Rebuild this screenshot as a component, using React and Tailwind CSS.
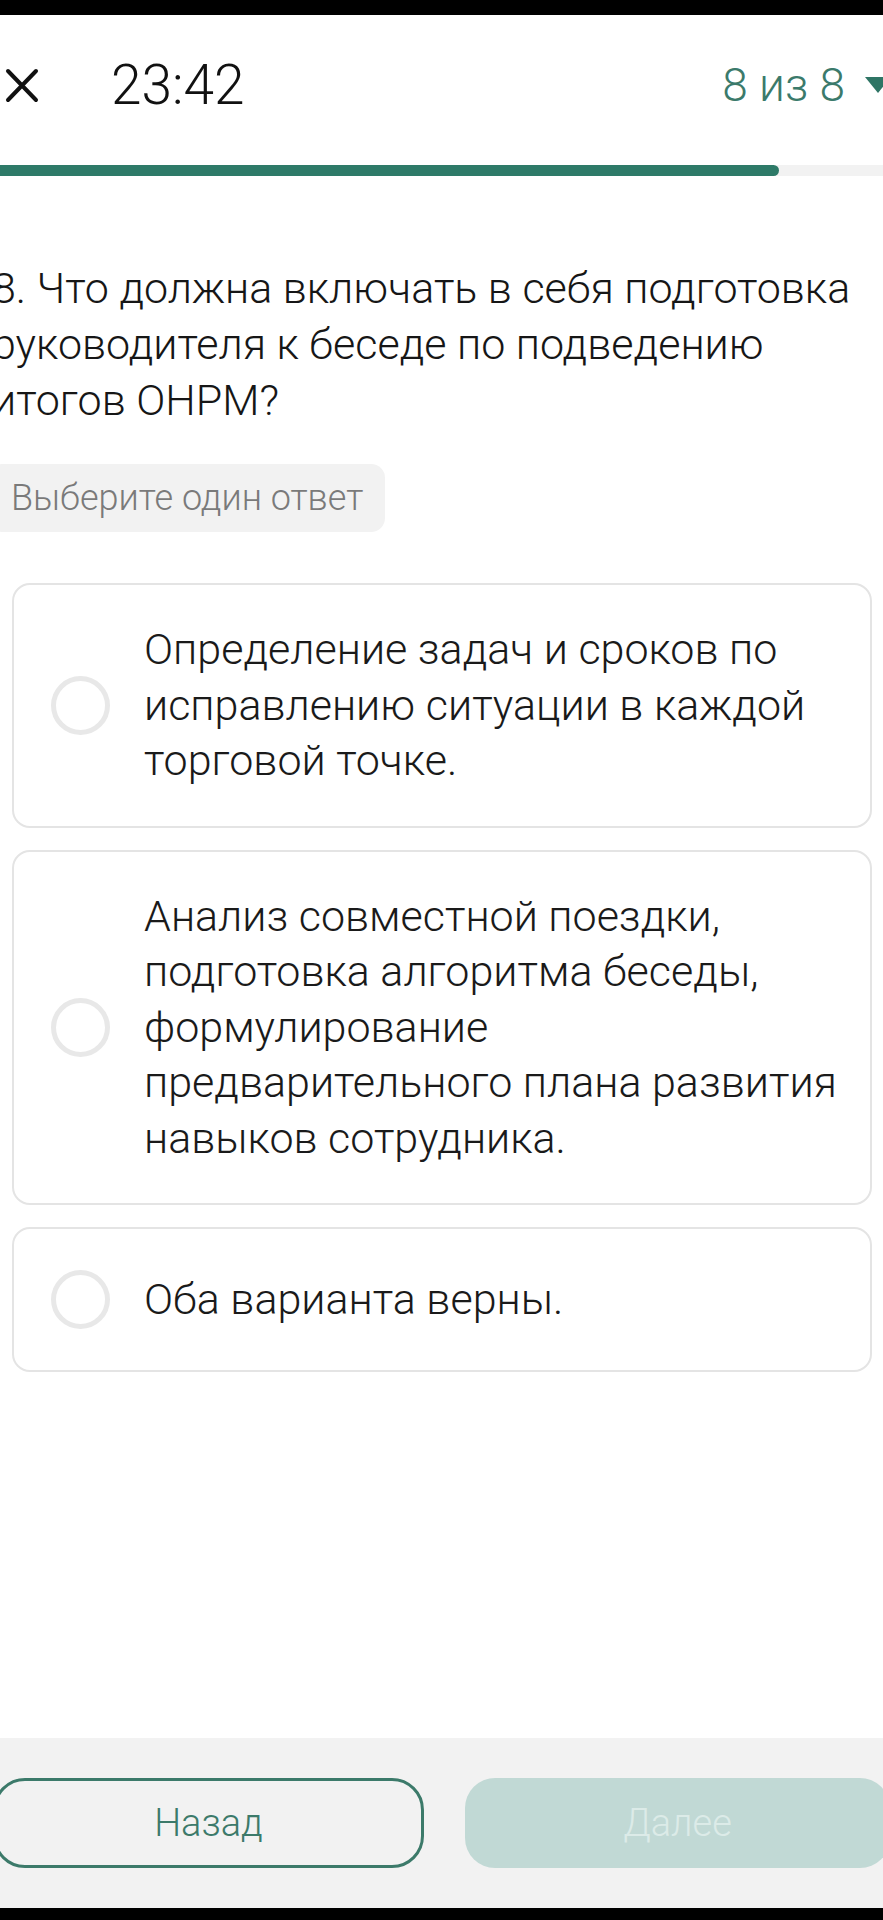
import React from 'react';

const options = [
  'Определение задач и сроков по исправлению ситуации в каждой торговой точке.',
  'Анализ совместной поездки, подготовка алгоритма беседы, формулирование предварительного плана развития навыков сотрудника.',
  'Оба варианта верны.',
];

function Radio() {
  return (
    <span className="shrink-0 w-[59px] h-[59px] rounded-full border-[5px] border-[#e8e8e8] bg-white" />
  );
}

function OptionCard({ text }) {
  return (
    <div className="flex items-center min-h-[145px] rounded-[18px] border-2 border-[#e4e4e4] bg-white pl-[37px] pr-[24px] py-[37px]">
      <Radio />
      <p className="ml-[34px] text-[43px] leading-[55.5px] font-light text-[#1a1a1a]">
        {text}
      </p>
    </div>
  );
}

export default function App() {
  return (
    <div
      className="w-[883px] h-[1920px] flex flex-col bg-white overflow-hidden"
      style={{ fontFamily: 'Roboto, "Noto Sans", sans-serif' }}
    >
      {/* status bar strip */}
      <div className="h-[15px] bg-black shrink-0" />

      {/* Header */}
      <div className="h-[140px] flex items-center shrink-0">
        <svg
          className="ml-[5px] shrink-0"
          width="34"
          height="35"
          viewBox="0 0 34 35"
          fill="none"
          stroke="#111"
          strokeWidth="4"
          strokeLinecap="round"
        >
          <path d="M3 3 L31 32 M31 3 L3 32" />
        </svg>
        <span className="ml-[72px] text-[55px] font-light text-[#111] leading-none">
          23:42
        </span>
        <div className="ml-auto flex items-center -mr-[8px]">
          <span className="text-[46px] font-light text-[#3b7a6b] leading-none">8 из 8</span>
          <svg className="ml-[20px]" width="26" height="16" viewBox="0 0 26 16">
            <polygon points="0,0 26,0 13,16" fill="#2f7565" />
          </svg>
        </div>
      </div>

      {/* Progress */}
      <div className="mt-[10px] h-[11px] bg-[#f2f2f2] shrink-0">
        <div className="h-full w-[779px] bg-[#2e7a68] rounded-r-full" />
      </div>

      {/* Question */}
      <h2 className="mt-[84px] -ml-[8px] pr-[24px] text-[43px] leading-[56px] font-light text-[#161616]">
        8. Что должна включать в себя подготовка руководителя к беседе по подведению итогов ОНРМ?
      </h2>

      <div className="mt-[36px] -ml-[12px] self-start h-[68px] flex items-center rounded-[14px] bg-[#f2f2f2] pl-[23px] pr-[22px]">
        <span className="text-[36px] font-light text-[#7a7a7a]">Выберите один ответ</span>
      </div>

      {/* Options */}
      <div className="mt-[51px] ml-[12px] mr-[11px] flex flex-col gap-[22px]">
        {options.map((o) => (
          <OptionCard key={o} text={o} />
        ))}
      </div>

      <div className="flex-1" />

      {/* Footer */}
      <div className="bg-[#f2f2f2] py-[40px] shrink-0">
        <div className="w-[897px] -ml-[7px] flex gap-[41px]">
          <button className="flex-1 h-[90px] rounded-[32px] border-[3px] border-[#3c7a6a] text-[38px] font-light text-[#3c7a6a]">
            Назад
          </button>
          <button className="flex-1 h-[90px] rounded-[30px] bg-[#c1d9d5] text-[38px] font-light text-[#dcebe8]">
            Далее
          </button>
        </div>
      </div>
      <div className="h-[12px] bg-black shrink-0" />
    </div>
  );
}
